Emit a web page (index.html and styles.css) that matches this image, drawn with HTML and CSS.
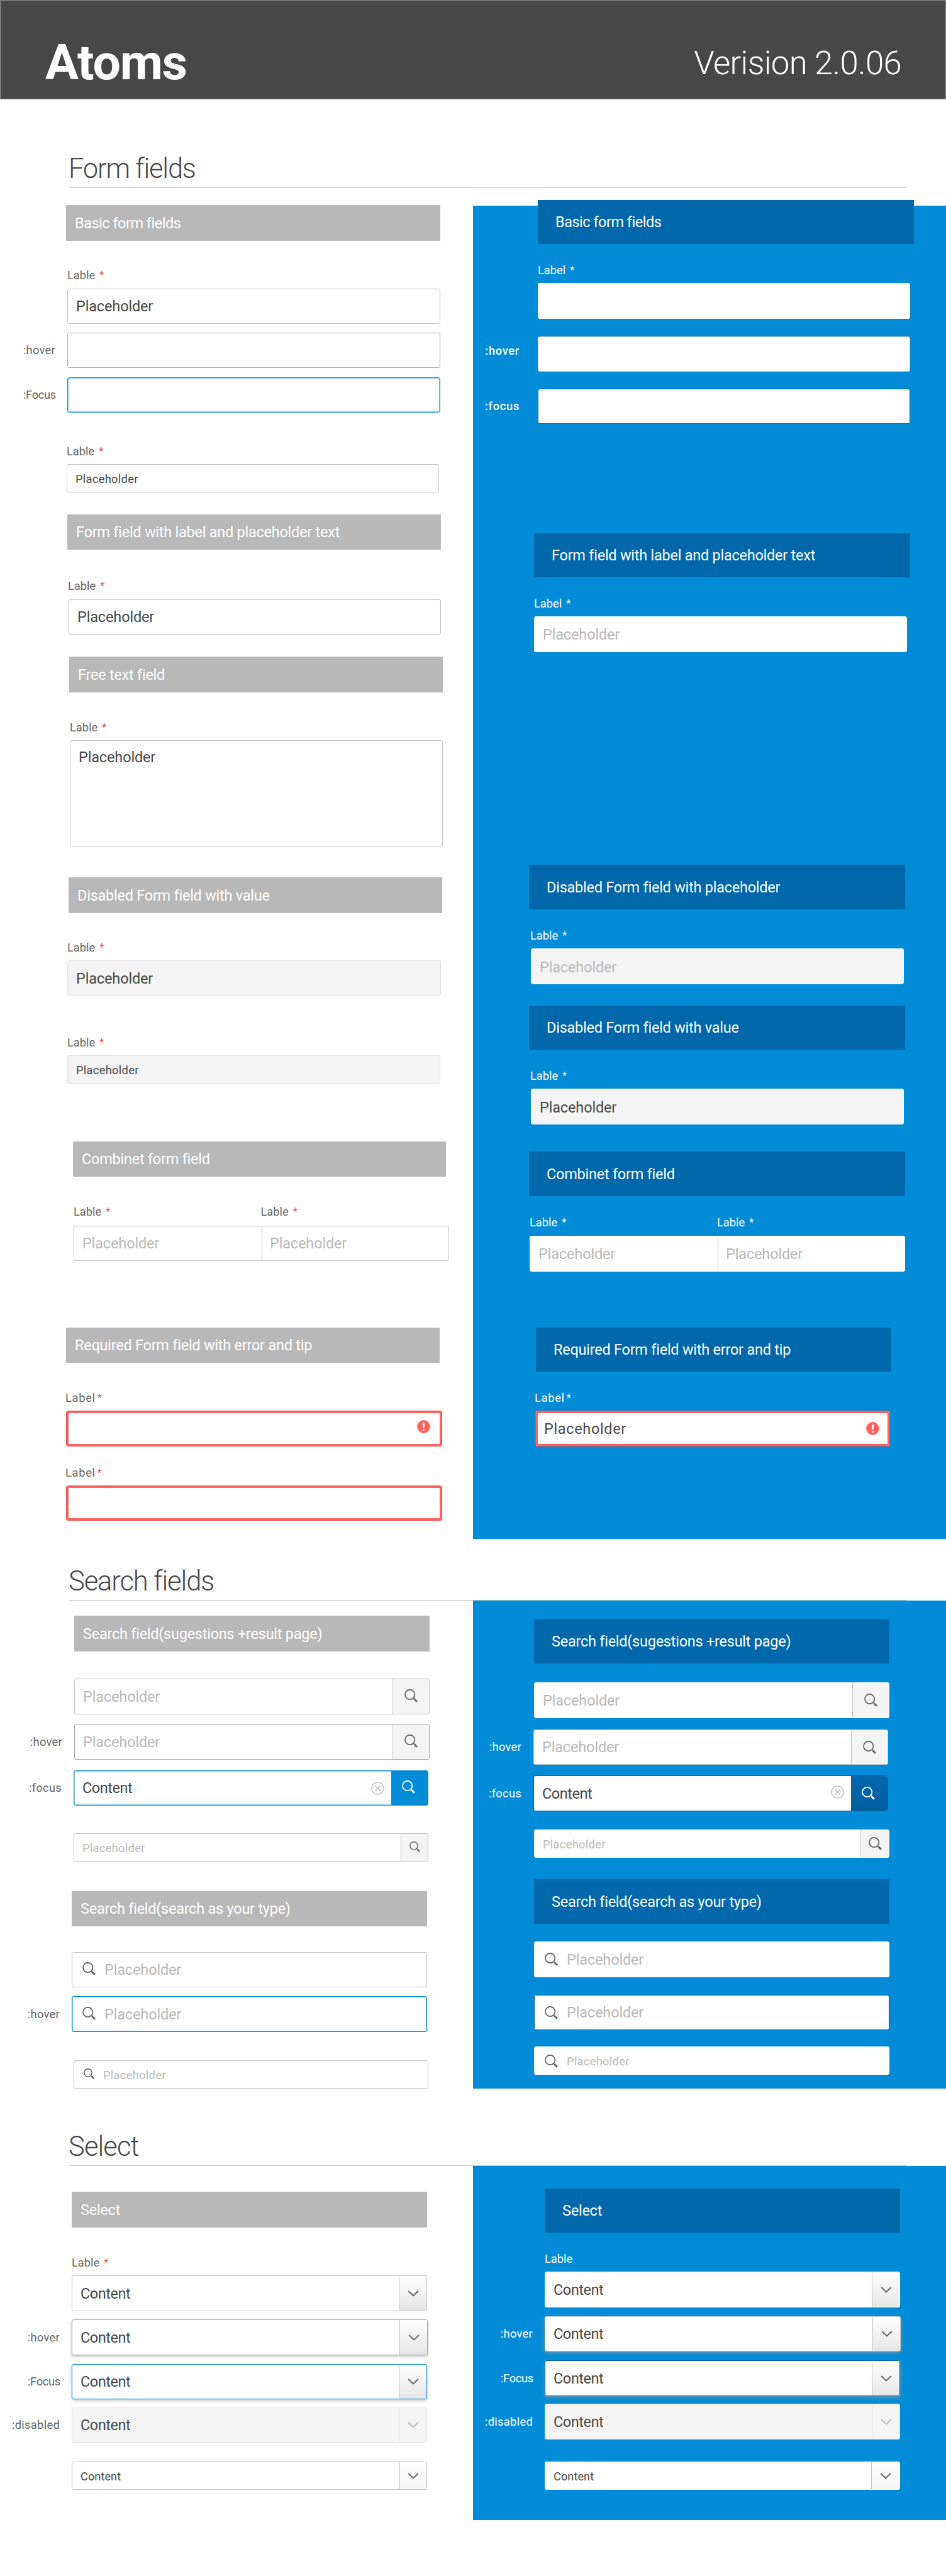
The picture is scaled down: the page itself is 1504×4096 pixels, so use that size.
FILE: index.html
```html
<!DOCTYPE html>
<html lang="en">
<head>
<meta charset="utf-8">
<title>Atoms</title>
<link rel="stylesheet" href="styles.css">
</head>
<body>
<svg class="sprite" aria-hidden="true">
  <symbol id="search" viewBox="0 0 21 21">
    <circle cx="8.7" cy="8.5" r="7.7" fill="none" stroke="currentColor" stroke-width="1.8"/>
    <path d="M14 13.8l2.2 2.2" stroke="currentColor" stroke-width="1.6" fill="none"/>
    <path d="M15.4 15.2l4.6 4.6" stroke="currentColor" stroke-width="3" fill="none"/>
  </symbol>
  <symbol id="clear" viewBox="0 0 21 21">
    <circle cx="10.5" cy="10.5" r="9.6" fill="none" stroke="currentColor" stroke-width="1.4"/>
    <path d="M6.3 6.3l8.4 8.4M14.7 6.3l-8.4 8.4" fill="none" stroke="currentColor" stroke-width="1.4"/>
  </symbol>
  <symbol id="chevron" viewBox="0 0 18 10">
    <path d="M1.2 1l7.8 7.4L16.800 1" fill="none" stroke="currentColor" stroke-width="2.1"/>
  </symbol>
  <symbol id="alert" viewBox="0 0 21 21">
    <circle cx="10.500" cy="10.500" r="10.400" fill="#ff6361"/>
    <path d="M8.800 4.300h3.400l-.7 8.500h-2z" fill="#fff"/>
    <path d="M9.200 14.700h2.600v2.300h-2.600z" fill="#fff"/>
  </symbol>
</svg>

<header class="masthead">
  <h1>Atoms</h1>
  <p class="version">Verision 2.0.06</p>
</header>

<section class="section forms">
  <h2>Form fields</h2>
  <div class="columns">
    <div class="column light">
      <h3 class="bar">Basic form fields</h3>
      <div class="label">Lable <i>*</i></div>
      <div class="field">Placeholder</div>
      <div class="row"><span class="state">:hover</span><div class="field hover"></div></div>
      <div class="row"><span class="state tight">:Focus</span><div class="field focus"></div></div>
      <div class="label">Lable <i>*</i></div>
      <div class="field small">Placeholder</div>
      <h3 class="bar">Form field with label and placeholder text</h3>
      <div class="label">Lable <i>*</i></div>
      <div class="field">Placeholder</div>
      <h3 class="bar">Free text field</h3>
      <div class="label">Lable <i>*</i></div>
      <div class="field area">Placeholder</div>
      <h3 class="bar">Disabled Form field with value</h3>
      <div class="label">Lable <i>*</i></div>
      <div class="field disabled">Placeholder</div>
      <div class="label">Lable <i>*</i></div>
      <div class="field disabled small">Placeholder</div>
      <h3 class="bar">Combinet form field</h3>
      <div class="pair"><div class="label">Lable <i>*</i></div><div class="label">Lable <i>*</i></div></div>
      <div class="field combined hint"><span>Placeholder</span><span>Placeholder</span></div>
      <h3 class="bar">Required Form field with error and tip</h3>
      <div class="label required">Label<i>*</i></div>
      <div class="field error"><svg class="icon alert"><use href="#alert"/></svg></div>
      <div class="label required">Label<i>*</i></div>
      <div class="field error"></div>
    </div>
    <div class="column blue">
      <h3 class="bar">Basic form fields</h3>
      <div class="label">Label <i>*</i></div>
      <div class="field"></div>
      <div class="row"><span class="state raised">:hover</span><div class="field hover"></div></div>
      <div class="row"><span class="state">:focus</span><div class="field focus"></div></div>
      <h3 class="bar">Form field with label and placeholder text</h3>
      <div class="label">Label <i>*</i></div>
      <div class="field hint">Placeholder</div>
      <h3 class="bar">Disabled Form field with placeholder</h3>
      <div class="label">Lable <i>*</i></div>
      <div class="field disabled hint">Placeholder</div>
      <h3 class="bar">Disabled Form field with value</h3>
      <div class="label">Lable <i>*</i></div>
      <div class="field disabled">Placeholder</div>
      <h3 class="bar">Combinet form field</h3>
      <div class="pair"><div class="label">Lable <i>*</i></div><div class="label">Lable <i>*</i></div></div>
      <div class="field combined hint"><span>Placeholder</span><span>Placeholder</span></div>
      <h3 class="bar">Required Form field with error and tip</h3>
      <div class="label required">Label<i>*</i></div>
      <div class="field error">Placeholder<svg class="icon alert"><use href="#alert"/></svg></div>
    </div>
  </div>
</section>

<section class="section searches">
  <h2>Search fields</h2>
  <div class="columns">
    <div class="column light">
      <h3 class="bar">Search field(sugestions +result page)</h3>
      <div class="field hint">Placeholder<span class="button"><svg class="icon"><use href="#search"/></svg></span></div>
      <div class="row"><span class="state">:hover</span><div class="field hint hover">Placeholder<span class="button"><svg class="icon"><use href="#search"/></svg></span></div></div>
      <div class="row"><span class="state">:focus</span><div class="field focus">Content<svg class="icon clear"><use href="#clear"/></svg><span class="button"><svg class="icon"><use href="#search"/></svg></span></div></div>
      <div class="field hint small">Placeholder<span class="button"><svg class="icon"><use href="#search"/></svg></span></div>
      <h3 class="bar">Search field(search as your type)</h3>
      <div class="field hint lead"><svg class="icon"><use href="#search"/></svg>Placeholder</div>
      <div class="row"><span class="state">:hover</span><div class="field hint lead focus"><svg class="icon"><use href="#search"/></svg>Placeholder</div></div>
      <div class="field hint lead small"><svg class="icon"><use href="#search"/></svg>Placeholder</div>
    </div>
    <div class="column blue">
      <h3 class="bar">Search field(sugestions +result page)</h3>
      <div class="field hint">Placeholder<span class="button"><svg class="icon"><use href="#search"/></svg></span></div>
      <div class="row"><span class="state">:hover</span><div class="field hint hover">Placeholder<span class="button"><svg class="icon"><use href="#search"/></svg></span></div></div>
      <div class="row"><span class="state">:focus</span><div class="field focus">Content<svg class="icon clear"><use href="#clear"/></svg><span class="button"><svg class="icon"><use href="#search"/></svg></span></div></div>
      <div class="field hint small">Placeholder<span class="button"><svg class="icon"><use href="#search"/></svg></span></div>
      <h3 class="bar">Search field(search as your type)</h3>
      <div class="field hint lead"><svg class="icon"><use href="#search"/></svg>Placeholder</div>
      <div class="field hint lead focus"><svg class="icon"><use href="#search"/></svg>Placeholder</div>
      <div class="field hint lead small"><svg class="icon"><use href="#search"/></svg>Placeholder</div>
    </div>
  </div>
</section>

<section class="section selects">
  <h2>Select</h2>
  <div class="columns">
    <div class="column light">
      <h3 class="bar">Select</h3>
      <div class="label">Lable <i>*</i></div>
      <div class="field content">Content<span class="button"><svg class="chevron"><use href="#chevron"/></svg></span></div>
      <div class="row"><span class="state">:hover</span><div class="field content hover">Content<span class="button"><svg class="chevron"><use href="#chevron"/></svg></span></div></div>
      <div class="row"><span class="state tight">:Focus</span><div class="field content focus">Content<span class="button"><svg class="chevron"><use href="#chevron"/></svg></span></div></div>
      <div class="row"><span class="state">:disabled</span><div class="field content disabled">Content<span class="button"><svg class="chevron"><use href="#chevron"/></svg></span></div></div>
      <div class="field small content">Content<span class="button"><svg class="chevron"><use href="#chevron"/></svg></span></div>
    </div>
    <div class="column blue">
      <h3 class="bar">Select</h3>
      <div class="label">Lable</div>
      <div class="field content">Content<span class="button"><svg class="chevron"><use href="#chevron"/></svg></span></div>
      <div class="row"><span class="state">:hover</span><div class="field content hover">Content<span class="button"><svg class="chevron"><use href="#chevron"/></svg></span></div></div>
      <div class="row"><span class="state tight">:Focus</span><div class="field content focus">Content<span class="button"><svg class="chevron"><use href="#chevron"/></svg></span></div></div>
      <div class="row"><span class="state">:disabled</span><div class="field content disabled">Content<span class="button"><svg class="chevron"><use href="#chevron"/></svg></span></div></div>
      <div class="field small content">Content<span class="button"><svg class="chevron"><use href="#chevron"/></svg></span></div>
    </div>
  </div>
</section>
</body>
</html>
```
FILE: styles.css
```css
* { box-sizing: border-box; }

body {
  margin: 0;
  width: 1504px;
  height: 4096px;
  background: #fff;
  color: #474747;
  font-family: Roboto, sans-serif;
  font-size: 23.5px;
}

h1, h2, h3, p { margin: 0; font-weight: 400; }
.sprite { display: none; }

/* Masthead */
.masthead {
  display: flex;
  justify-content: space-between;
  height: 158px;
  padding: 58px 70px 0 71px;
  border: 1px solid #8f8f8f;
  background: #474747;
  color: #fff;
}
.masthead h1 { font-size: 78.7px; line-height: 80px; font-weight: 700; letter-spacing: -1.2px; }
.version { padding-top: 11px; font-size: 52.7px; line-height: 60px; font-weight: 300; letter-spacing: -.7px; }

/* Sections */
.section h2 {
  width: 1332px;
  margin-left: 110px;
  padding-bottom: 3px;
  border-bottom: 1px solid #c4c4c4;
  font-size: 43.5px;
  line-height: 52px;
  font-weight: 300;
  letter-spacing: -1.2px;
  text-indent: -1px;
}
.forms h2 { margin-top: 85px; }
.searches h2 { margin-top: 42px; letter-spacing: -1.1px; }
.selects h2 { margin-top: 70px; letter-spacing: -.9px; }
.columns { display: grid; grid-template-columns: 752px 752px; }
.forms .columns { margin-top: 28px; height: 2120px; }
.searches .columns { height: 773px; }
.selects .columns { height: 563px; }

/* Every item of a column takes its indent (--x), width (--w), height (--h) and gap above (--gap) from the tables below */
.column { display: flex; flex-direction: column; }
.column > * {
  flex: none;
  width: var(--w);
  height: var(--h);
  margin: var(--gap) 0 0 var(--x);
}
.column > .row {
  display: grid;
  grid-template-columns: var(--x) var(--w);
  width: auto;
  margin-left: 0;
}
.blue { background: #028cd7; color: #fff; }

.bar {
  display: flex;
  align-items: center;
  padding-left: 14px;
  background: #b8b8b8;
  color: #fff;
  font-size: 23.5px;
  letter-spacing: -.25px;
}
.forms .bar:first-child { letter-spacing: -.5px; }
.blue .bar { padding-left: 28px; background: #0067ab; }

.column .label {
  --h: 20px;
  --w: 200px;
  display: flex;
  gap: 7px;
  color: #666;
  font-size: 18.3px;
  line-height: 20px;
}
.label i { color: #e5504f; font-style: normal; font-size: 16px; }
.label.required { gap: 3px; letter-spacing: .7px; }
.blue .label, .blue .label i { color: #fff; }
.pair { --h: 20px; display: grid; grid-template-columns: 1fr 1fr; }

.state {
  align-self: center;
  padding-right: 19px;
  color: #666;
  font-size: 18.3px;
  line-height: 20px;
  letter-spacing: .3px;
  text-align: right;
}
.state.tight { letter-spacing: -.3px; padding-right: 18px; }
.blue .state { color: #fff; }
.forms .blue .state { padding-right: 29px; font-weight: 500; letter-spacing: .7px; }
.state.raised { margin-bottom: 10px; }

/* Fields */
.field {
  display: flex;
  align-items: center;
  overflow: hidden;
  padding-left: 13px;
  border: 1px solid #c4c4c4;
  border-radius: 3px;
  background: #fff;
  color: #474747;
  letter-spacing: -.15px;
}
.blue .field { border-color: #fff; }
.field.hint { color: #b9b9b9; }
.field.small { font-size: 18.3px; padding-top: 1px; letter-spacing: .3px; }
.field.hover { border-color: #a6a6a6; }
.field.focus { border-color: #028cd7; }
.blue .field.hover { border-color: #cfcfcf; }
.blue .field.focus { border-color: #0061a3; }
.light .field.focus { box-shadow: inset 0 0 0 .5px #028cd7; }
.field.disabled { border-color: #e0e0e0; background: #f4f4f4; }
.forms .field.disabled { padding-top: 2px; }
.forms .blue .field.disabled { border-color: #f4f4f4; }
.field.area { align-items: flex-start; padding-top: 12px; line-height: 28px; }
.field.combined { display: grid; grid-template-columns: 298px 1fr; padding: 0; }
.combined span { display: flex; align-items: center; height: 100%; padding-left: 13px; }
.combined span + span { border-left: 1px solid #c4c4c4; padding-left: 12px; }
.column .field.error {
  padding-left: 10px;
  border: 1px solid #e5504f;
  box-shadow: inset 0 0 0 3px #ff6361;
}
.blue .field.error { padding: 0 0 0 13px; letter-spacing: .65px; }
.alert { margin: 0 18px 6px auto; }
.blue .alert { margin: 0 16px 0 auto; }

/* Buttons and icons inside fields */
.icon { flex: none; width: 21px; height: 21px; }
.button {
  display: flex;
  align-items: center;
  justify-content: center;
  align-self: stretch;
  width: 58px;
  margin-left: auto;
  border-left: 1px solid #c4c4c4;
  background: #f4f4f4;
  color: #666;
}
.searches .light .button { padding-bottom: 3px; }
.field.small .button { width: 43px; margin-top: -1px; }
.light .small .icon { width: 17px; height: 17px; }
.blue .small .button { width: 45px; }
.clear { margin: 0 11px 0 auto; color: #b9b9b9; }
.blue .clear { margin-bottom: 5px; }
.clear + .button { margin-left: 0; color: #fff; background: #028cd7; border-color: #028cd7; }
.blue .clear + .button { background: linear-gradient(#0067ab, #00609f); border-color: #0067ab; }
.searches .focus > .button { padding-right: 4px; }
.lead { gap: 14px; padding-left: 16px; }
.light .lead.small { padding-left: 15px; }
.lead .icon { color: #666; }
.light .lead .icon { margin-bottom: 3px; }
.searches .field.focus:not(.lead) { letter-spacing: -.45px; }

.field.content { letter-spacing: -.45px; }
.field.content.small { letter-spacing: 0; }
.content .button { width: 44px; background: linear-gradient(#fff, #e6e6e6); }
.content.small .button { background: linear-gradient(#fff, #f4f4f4); }
.content.disabled .button { background: none; border-color: #e0e0e0; color: #b9b9b9; }
.chevron { width: 18px; height: 10px; }
.light .content.hover, .light .content.focus { box-shadow: 0 2px 5px rgba(0, 0, 0, .25); }
.blue .content.hover, .blue .content.focus { box-shadow: 0 2px 6px rgba(150, 150, 150, .7); }

/* Form fields, light */
.forms .light > :nth-child(1) { --gap: -1px; --x: 105px; --w: 595px; --h: 57px; }
.forms .light > :nth-child(2) { --gap: 45px; --x: 107px; }
.forms .light > :nth-child(3) { --gap: 11px; --x: 107px; --w: 593px; --h: 56px; }
.forms .light > :nth-child(4) { --gap: 14px; --x: 107px; --w: 593px; --h: 56px; }
.forms .light > :nth-child(5) { --gap: 15px; --x: 107px; --w: 593px; --h: 56px; }
.forms .light > :nth-child(6) { --gap: 52px; --x: 106px; }
.forms .light > :nth-child(7) { --gap: 10px; --x: 106px; --w: 592px; --h: 45px; }
.forms .light > :nth-child(8) { --gap: 35px; --x: 107px; --w: 594px; --h: 56px; }
.forms .light > :nth-child(9) { --gap: 48px; --x: 108px; }
.forms .light > :nth-child(10) { --gap: 11px; --x: 109px; --w: 592px; --h: 56px; }
.forms .light > :nth-child(11) { --gap: 35px; --x: 110px; --w: 594px; --h: 57px; }
.forms .light > :nth-child(12) { --gap: 46px; --x: 111px; }
.forms .light > :nth-child(13) { --gap: 10px; --x: 111px; --w: 593px; --h: 170px; }
.forms .light > :nth-child(14) { --gap: 48px; --x: 109px; --w: 594px; --h: 57px; }
.forms .light > :nth-child(15) { --gap: 45px; --x: 107px; }
.forms .light > :nth-child(16) { --gap: 10px; --x: 107px; --w: 594px; --h: 56px; }
.forms .light > :nth-child(17) { --gap: 65px; --x: 107px; }
.forms .light > :nth-child(18) { --gap: 10px; --x: 107px; --w: 593px; --h: 45px; }
.forms .light > :nth-child(19) { --gap: 92px; --x: 116px; --w: 593px; --h: 56px; }
.forms .light > :nth-child(20) { --gap: 46px; --x: 117px; --w: 595px; }
.forms .light > :nth-child(21) { --gap: 12px; --x: 117px; --w: 597px; --h: 56px; }
.forms .light > :nth-child(22) { --gap: 106px; --x: 105px; --w: 594px; --h: 56px; }
.forms .light > :nth-child(23) { --gap: 46px; --x: 104px; }
.forms .light > :nth-child(24) { --gap: 10px; --x: 105px; --w: 598px; --h: 57px; }
.forms .light > :nth-child(25) { --gap: 32px; --x: 104px; }
.forms .light > :nth-child(26) { --gap: 10px; --x: 105px; --w: 598px; --h: 56px; }

/* Form fields, blue */
.forms .blue > :nth-child(1) { --gap: -9px; --x: 103px; --w: 598px; --h: 70px; }
.forms .blue > :nth-child(2) { --gap: 32px; --x: 103px; }
.forms .blue > :nth-child(3) { --gap: 10px; --x: 103px; --w: 592px; --h: 57px; }
.forms .blue > :nth-child(4) { --gap: 28px; --x: 103px; --w: 592px; --h: 56px; }
.forms .blue > :nth-child(5) { --gap: 27px; --x: 103px; --w: 592px; --h: 56px; }
.forms .blue > :nth-child(6) { --gap: 174px; --x: 97px; --w: 598px; --h: 70px; }
.forms .blue > :nth-child(7) { --gap: 32px; --x: 97px; }
.forms .blue > :nth-child(8) { --gap: 10px; --x: 97px; --w: 593px; --h: 57px; }
.forms .blue > :nth-child(9) { --gap: 338px; --x: 89px; --w: 598px; --h: 71px; }
.forms .blue > :nth-child(10) { --gap: 32px; --x: 91px; }
.forms .blue > :nth-child(11) { --gap: 10px; --x: 92px; --w: 593px; --h: 57px; }
.forms .blue > :nth-child(12) { --gap: 34px; --x: 89px; --w: 598px; --h: 70px; }
.forms .blue > :nth-child(13) { --gap: 32px; --x: 91px; }
.forms .blue > :nth-child(14) { --gap: 10px; --x: 92px; --w: 593px; --h: 57px; }
.forms .blue > :nth-child(15) { --gap: 43px; --x: 89px; --w: 598px; --h: 71px; }
.forms .blue > :nth-child(16) { --gap: 32px; --x: 90px; --w: 596px; }
.forms .blue > :nth-child(17) { --gap: 11px; --x: 90px; --w: 597px; --h: 57px; }
.forms .blue > :nth-child(18) { --gap: 89px; --x: 100px; --w: 565px; --h: 70px; }
.forms .blue > :nth-child(19) { --gap: 32px; --x: 98px; }
.forms .blue > :nth-child(20) { --gap: 10px; --x: 99px; --w: 564px; --h: 57px; }

/* Search fields, light */
.searches .light > :nth-child(1) { --gap: 24px; --x: 118px; --w: 565px; --h: 57px; }
.searches .light > :nth-child(2) { --gap: 43px; --x: 118px; --w: 565px; --h: 57px; }
.searches .light > :nth-child(3) { --gap: 15px; --x: 118px; --w: 565px; --h: 57px; }
.searches .light > :nth-child(4) { --gap: 17px; --x: 117px; --w: 564px; --h: 56px; }
.searches .light > :nth-child(5) { --gap: 44px; --x: 117px; --w: 564px; --h: 45px; }
.searches .light > :nth-child(6) { --gap: 47px; --x: 114px; --w: 565px; --h: 56px; }
.searches .light > :nth-child(7) { --gap: 41px; --x: 114px; --w: 565px; --h: 56px; }
.searches .light > :nth-child(8) { --gap: 14px; --x: 114px; --w: 565px; --h: 57px; }
.searches .light > :nth-child(9) { --gap: 45px; --x: 117px; --w: 564px; --h: 45px; }

/* Search fields, blue */
.searches .blue > :nth-child(1) { --gap: 30px; --x: 97px; --w: 565px; --h: 70px; }
.searches .blue > :nth-child(2) { --gap: 30px; --x: 97px; --w: 565px; --h: 57px; }
.searches .blue > :nth-child(3) { --gap: 18px; --x: 96px; --w: 564px; --h: 56px; }
.searches .blue > :nth-child(4) { --gap: 17px; --x: 96px; --w: 564px; --h: 57px; }
.searches .blue > :nth-child(5) { --gap: 29px; --x: 97px; --w: 565px; --h: 45px; }
.searches .blue > :nth-child(6) { --gap: 34px; --x: 97px; --w: 565px; --h: 71px; }
.searches .blue > :nth-child(7) { --gap: 28px; --x: 97px; --w: 565px; --h: 57px; }
.searches .blue > :nth-child(8) { --gap: 28px; --x: 97px; --w: 565px; --h: 56px; }
.searches .blue > :nth-child(9) { --gap: 26px; --x: 97px; --w: 565px; --h: 45px; }

/* Select, light */
.selects .light > :nth-child(1) { --gap: 41px; --x: 114px; --w: 565px; --h: 57px; }
.selects .light > :nth-child(2) { --gap: 46px; --x: 114px; }
.selects .light > :nth-child(3) { --gap: 10px; --x: 114px; --w: 565px; --h: 57px; }
.selects .light > :nth-child(4) { --gap: 13px; --x: 114px; --w: 566px; --h: 57px; }
.selects .light > :nth-child(5) { --gap: 14px; --x: 114px; --w: 565px; --h: 56px; }
.selects .light > :nth-child(6) { --gap: 13px; --x: 114px; --w: 565px; --h: 56px; }
.selects .light > :nth-child(7) { --gap: 30px; --x: 114px; --w: 565px; --h: 45px; }

/* Select, blue */
.selects .blue > :nth-child(1) { --gap: 36px; --x: 114px; --w: 565px; --h: 70px; }
.selects .blue > :nth-child(2) { --gap: 32px; --x: 114px; }
.selects .blue > :nth-child(3) { --gap: 10px; --x: 114px; --w: 565px; --h: 57px; }
.selects .blue > :nth-child(4) { --gap: 14px; --x: 114px; --w: 566px; --h: 56px; }
.selects .blue > :nth-child(5) { --gap: 14px; --x: 114px; --w: 565px; --h: 57px; }
.selects .blue > :nth-child(6) { --gap: 12px; --x: 114px; --w: 565px; --h: 57px; }
.selects .blue > :nth-child(7) { --gap: 35px; --x: 114px; --w: 565px; --h: 45px; }
```
